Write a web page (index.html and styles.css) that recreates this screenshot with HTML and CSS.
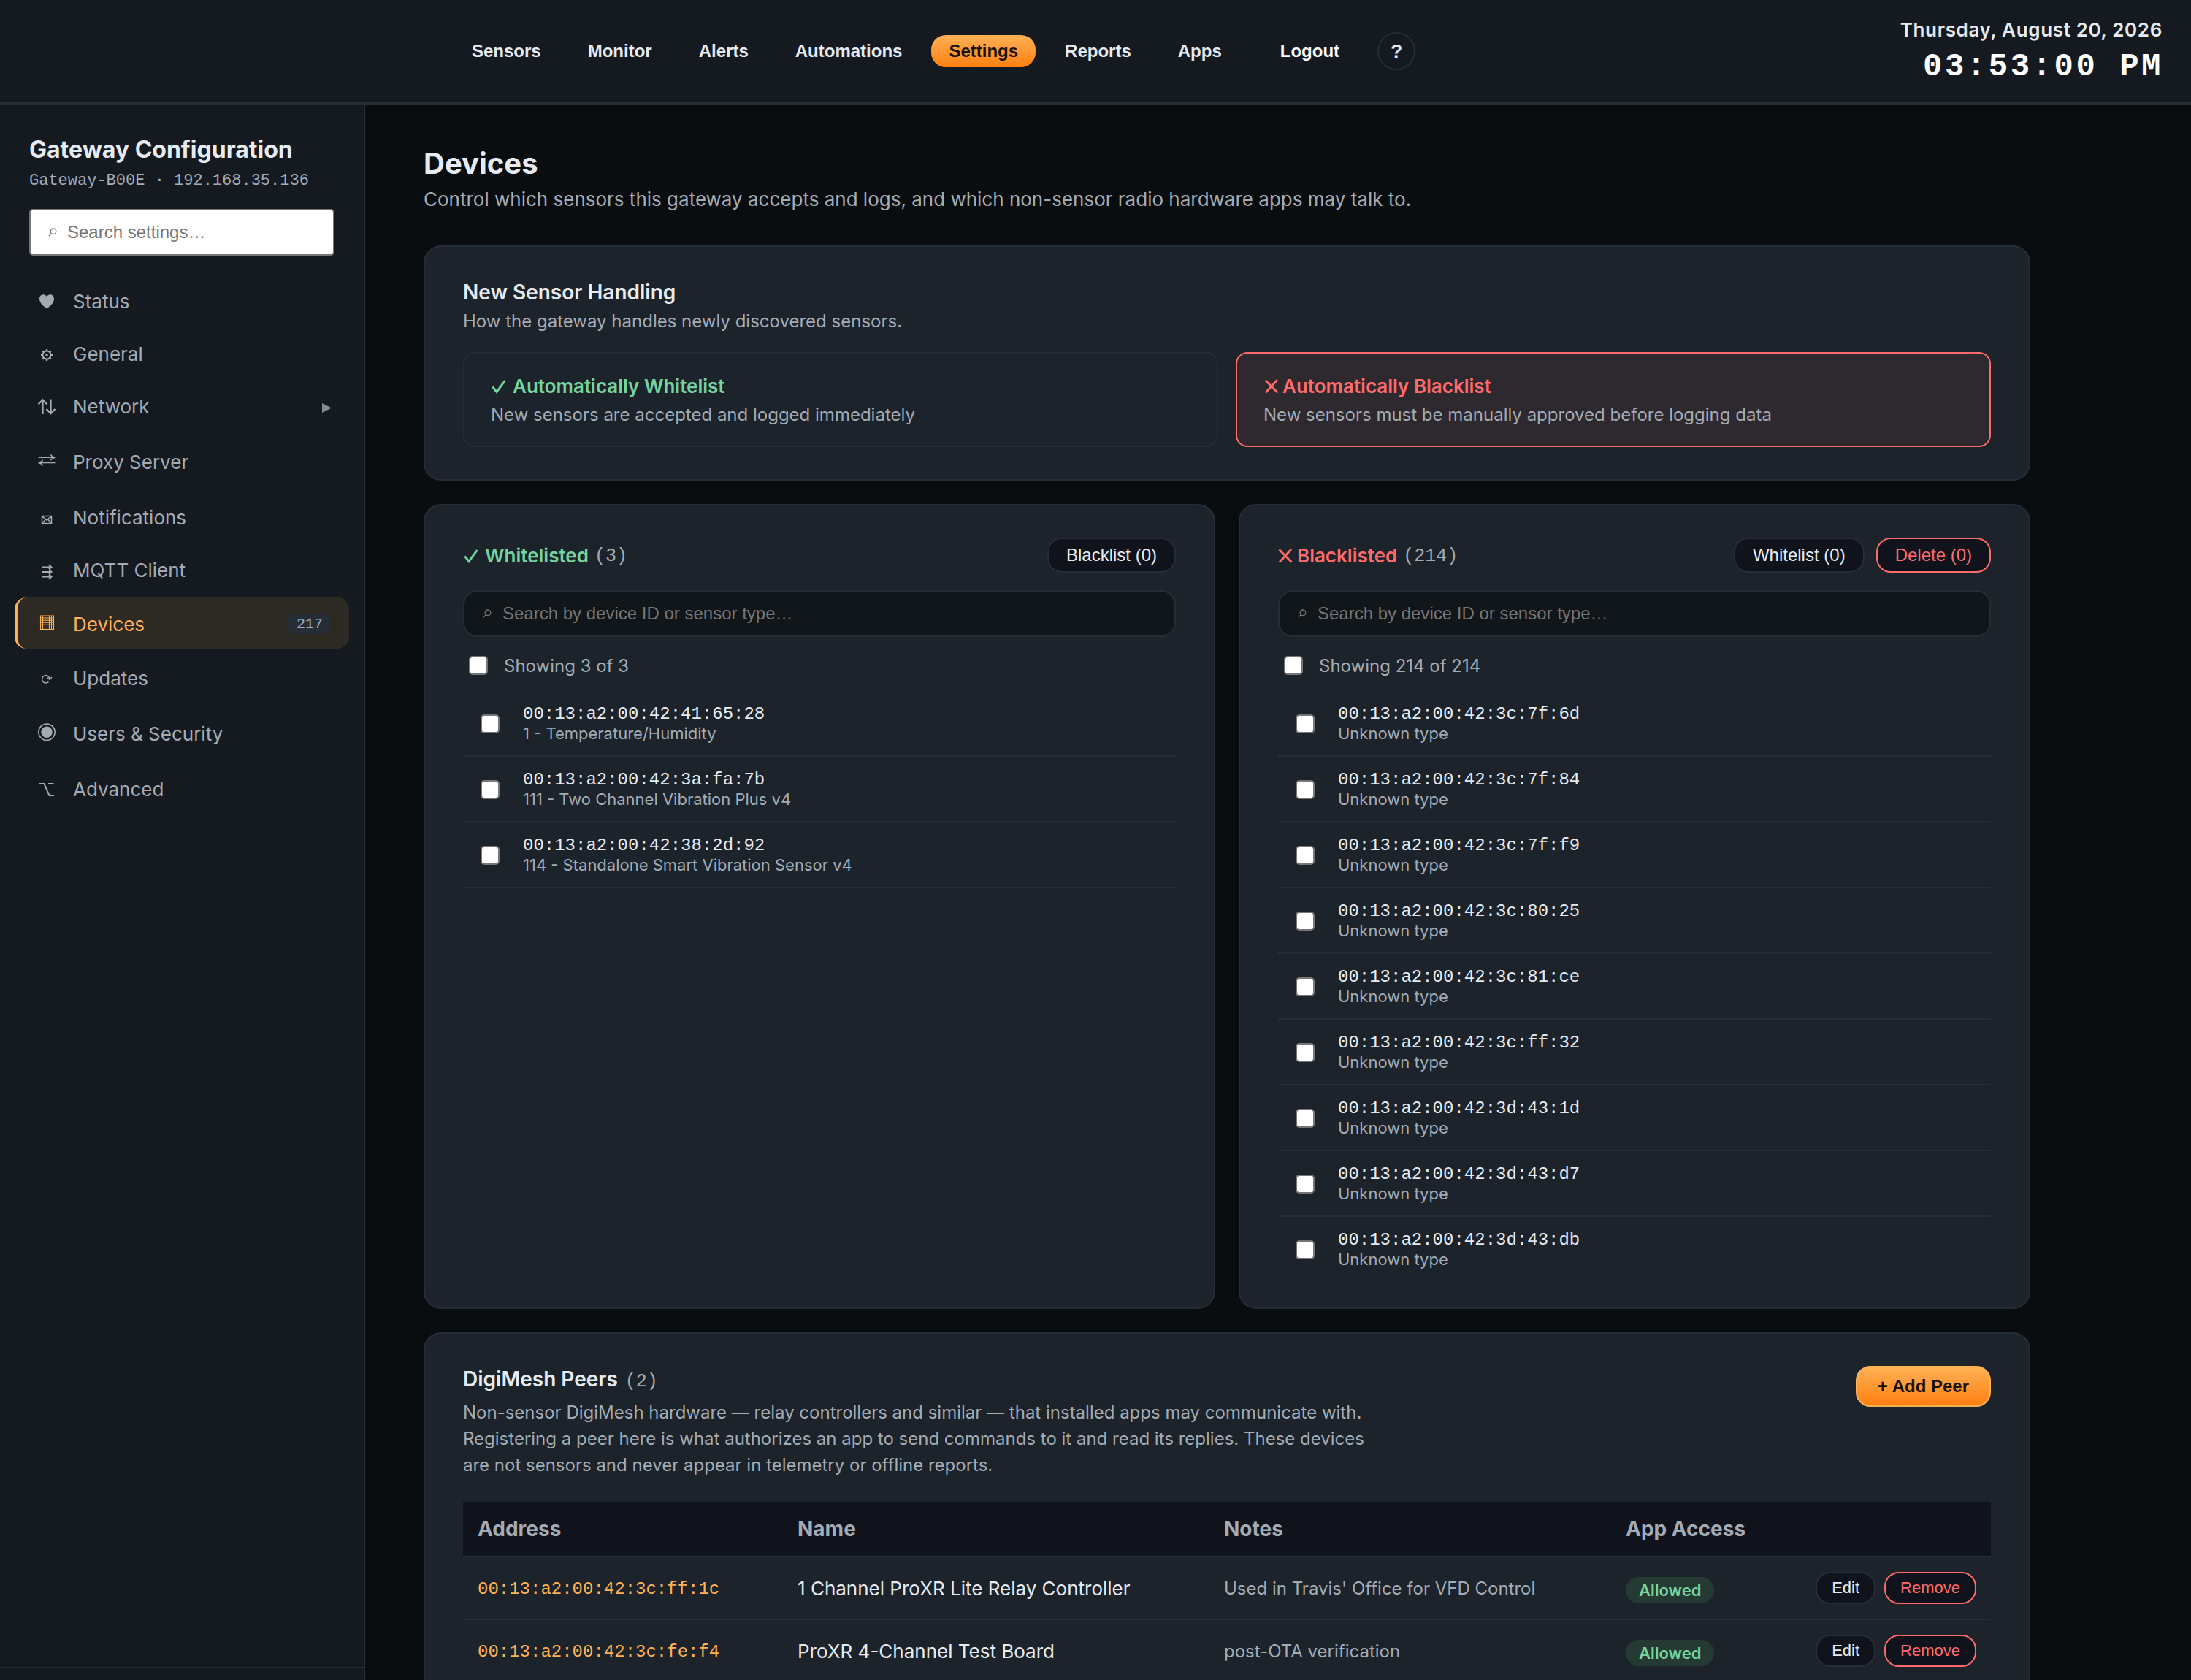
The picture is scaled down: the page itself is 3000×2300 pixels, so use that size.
FILE: index.html
```html
<!DOCTYPE html>
<html lang="en">
<head>
<meta charset="utf-8">
<title>Gateway Configuration</title>
<link rel="stylesheet" href="styles.css">
</head>
<body>
<header class="topbar">
  <nav class="topnav">
    <a>Sensors</a><a>Monitor</a><a>Alerts</a><a>Automations</a><a class="current">Settings</a><a>Reports</a><a>Apps</a><a class="logout">Logout</a><a class="help">?</a>
  </nav>
  <div class="clock">
    <div class="date">Thursday, August 20, 2026</div>
    <div class="time">03:53:00 PM</div>
  </div>
</header>
<div class="shell">
  <aside class="sidebar">
    <div class="side-body">
      <h2 class="side-title">Gateway Configuration</h2>
      <div class="side-sub">Gateway-B00E · 192.168.35.136</div>
      <div class="side-search"><svg class="mag" viewBox="0 0 12 12"><circle cx="7" cy="4.8" r="3.8"/><path d="M4.4 7.6 1 11"/></svg>Search settings…</div>
      <ul class="menu">
        <li><svg class="ico" viewBox="0 0 28 36"><path class="fill" d="M14 26.5C10 23.5 4 19 4 13.2 4 9.500 6.300 7.200 9.200 7.200c2 0 3.800 1 4.800 2.800 1-1.800 2.800-2.800 4.800-2.800 2.900 0 5.200 2.300 5.200 6C24 19 18 23.500 14 26.500Z"/></svg><span>Status</span></li>
        <li><svg class="ico" viewBox="0 0 28 36"><circle cx="14" cy="18" r="5.600"/><circle class="fill" cx="14" cy="18" r="1.700"/><path class="teeth" d="M14 10v3M14 23v3M6 18h3M19 18h3M8.300 12.300l2.200 2.200M17.500 21.500l2.200 2.200M8.300 23.700l2.200-2.200M17.500 14.500l2.200-2.200"/></svg><span>General</span></li>
        <li class="tall"><svg class="ico" viewBox="0 0 28 36"><path class="bold" d="M8.500 27V8M2.500 13.500 8.500 7.500l6 6M19.500 6.500V25.500M13.500 20l6 6 6-6"/></svg><span>Network</span><svg class="caret" viewBox="0 0 12 12"><path d="M0 0 12 6 0 12Z"/></svg></li>
        <li class="tall"><svg class="ico" viewBox="0 0 28 36"><path class="thin" d="M2.500 10.300H25M19.500 6.300c1 2.200 3 3.500 6 4-3 .5-5 1.800-6 4M3 17.500H25.500M8.500 13.500c-1 2.200-3 3.500-6 4 3 .5 5 1.800 6 4"/></svg><span>Proxy Server</span></li>
        <li><svg class="ico" viewBox="0 0 28 36"><path class="thin" d="M7.500 14.500h13v10h-13zM7.500 14.500l6.500 5.500 6.500-5.500M7.500 24.500l5-5.500M20.500 24.500l-5-5.500"/></svg><span>Notifications</span></li>
        <li class="mid"><svg class="ico" viewBox="0 0 28 36"><path d="M7 12.500H20M7 19H20M7 25.500H20M17 9.500l3.500 3-3.500 3M17 16l3.500 3-3.500 3M17 22.500l3.500 3-3.500 3"/></svg><span>MQTT Client</span></li>
        <li class="mid active"><svg class="ico" viewBox="0 0 28 36"><path class="hair" d="M5.500 5h18v18.500h-18zM8.500 5v18.500M11.500 5v18.500M14.500 5v18.500M17.500 5v18.500M20.500 5v18.500M5.500 8h18M5.500 11.200h18M5.500 14.300h18M5.500 17.400h18M5.500 20.500h18"/></svg><span>Devices</span><em class="badge">217</em></li>
        <li class="tall"><svg class="ico" viewBox="0 0 28 36"><path class="thin" d="M16.500 21.500A5.200 5.200 0 1 1 18 17.500M14.500 15.500l3.500 2.800 3-3.300"/></svg><span>Updates</span></li>
        <li class="tall"><svg class="ico" viewBox="0 0 28 36"><circle class="thin" cx="14" cy="14.300" r="11.200"/><circle class="fill" cx="14" cy="14.300" r="7.700"/></svg><span>Users &amp; Security</span></li>
        <li><svg class="ico" viewBox="0 0 28 36"><path d="M4 9H10.500L17.500 25H24M16 9H23.500"/></svg><span>Advanced</span></li>
      </ul>
    </div>
    <div class="side-foot"></div>
  </aside>
  <main class="main">
    <h1>Devices</h1>
    <p class="lead">Control which sensors this gateway accepts and logs, and which non-sensor radio hardware apps may talk to.</p>

    <section class="card handling">
      <h3>New Sensor Handling</h3>
      <p class="hint">How the gateway handles newly discovered sensors.</p>
      <div class="options">
        <div class="option">
          <div class="option-title ok"><svg class="check" viewBox="0 0 20 20"><path d="M1.500 10.500 7 17.500 18.500 2"/></svg>Automatically Whitelist</div>
          <div class="option-desc">New sensors are accepted and logged immediately</div>
        </div>
        <div class="option chosen">
          <div class="option-title bad"><svg class="cross" viewBox="0 0 20 20"><path d="M1.500 1.500 18.500 18.500M18 1 2 18.500"/></svg>Automatically Blacklist</div>
          <div class="option-desc">New sensors must be manually approved before logging data</div>
        </div>
      </div>
    </section>

    <div class="pair">
      <section class="card">
        <div class="list-head">
          <h4 class="ok"><svg class="check" viewBox="0 0 20 20"><path d="M1.500 10.500 7 17.500 18.500 2"/></svg>Whitelisted<span class="count">(3)</span></h4>
          <button class="btn">Blacklist (0)</button>
        </div>
        <div class="search"><svg class="mag" viewBox="0 0 12 12"><circle cx="7" cy="4.800" r="3.800"/><path d="M4.400 7.600 1 11"/></svg>Search by device ID or sensor type…</div>
        <div class="showing"><i class="box"></i>Showing 3 of 3</div>
        <div class="rows">
          <div class="row"><i class="box"></i><div><b>00:13:a2:00:42:41:65:28</b><small>1 - Temperature/Humidity</small></div></div>
          <div class="row"><i class="box"></i><div><b>00:13:a2:00:42:3a:fa:7b</b><small>111 - Two Channel Vibration Plus v4</small></div></div>
          <div class="row"><i class="box"></i><div><b>00:13:a2:00:42:38:2d:92</b><small>114 - Standalone Smart Vibration Sensor v4</small></div></div>
        </div>
      </section>
      <section class="card">
        <div class="list-head">
          <h4 class="bad"><svg class="cross" viewBox="0 0 20 20"><path d="M1.500 1.500 18.500 18.500M18 1 2 18.500"/></svg>Blacklisted<span class="count">(214)</span></h4>
          <button class="btn">Whitelist (0)</button>
          <button class="btn danger">Delete (0)</button>
        </div>
        <div class="search"><svg class="mag" viewBox="0 0 12 12"><circle cx="7" cy="4.800" r="3.800"/><path d="M4.400 7.600 1 11"/></svg>Search by device ID or sensor type…</div>
        <div class="showing"><i class="box"></i>Showing 214 of 214</div>
        <div class="rows">
          <div class="row"><i class="box"></i><div><b>00:13:a2:00:42:3c:7f:6d</b><small>Unknown type</small></div></div>
          <div class="row"><i class="box"></i><div><b>00:13:a2:00:42:3c:7f:84</b><small>Unknown type</small></div></div>
          <div class="row"><i class="box"></i><div><b>00:13:a2:00:42:3c:7f:f9</b><small>Unknown type</small></div></div>
          <div class="row"><i class="box"></i><div><b>00:13:a2:00:42:3c:80:25</b><small>Unknown type</small></div></div>
          <div class="row"><i class="box"></i><div><b>00:13:a2:00:42:3c:81:ce</b><small>Unknown type</small></div></div>
          <div class="row"><i class="box"></i><div><b>00:13:a2:00:42:3c:ff:32</b><small>Unknown type</small></div></div>
          <div class="row"><i class="box"></i><div><b>00:13:a2:00:42:3d:43:1d</b><small>Unknown type</small></div></div>
          <div class="row"><i class="box"></i><div><b>00:13:a2:00:42:3d:43:d7</b><small>Unknown type</small></div></div>
          <div class="row"><i class="box"></i><div><b>00:13:a2:00:42:3d:43:db</b><small>Unknown type</small></div></div>
        </div>
      </section>
    </div>

    <section class="card peers">
      <div class="peers-head">
        <div>
          <h3>DigiMesh Peers<span class="count">(2)</span></h3>
          <p class="peers-desc">Non-sensor DigiMesh hardware — relay controllers and similar — that installed apps may communicate with.<br>Registering a peer here is what authorizes an app to send commands to it and read its replies. These devices<br>are not sensors and never appear in telemetry or offline reports.</p>
        </div>
        <button class="add">+ Add Peer</button>
      </div>
      <div class="table">
        <div class="tr th"><span>Address</span><span>Name</span><span>Notes</span><span>App Access</span><span></span></div>
        <div class="tr"><span class="addr">00:13:a2:00:42:3c:ff:1c</span><span class="name">1 Channel ProXR Lite Relay Controller</span><span class="note">Used in Travis' Office for VFD Control</span><span><em class="allowed">Allowed</em></span><span class="acts"><button class="btn sm">Edit</button><button class="btn sm danger">Remove</button></span></div>
        <div class="tr"><span class="addr">00:13:a2:00:42:3c:fe:f4</span><span class="name">ProXR 4-Channel Test Board</span><span class="note">post-OTA verification</span><span><em class="allowed">Allowed</em></span><span class="acts"><button class="btn sm">Edit</button><button class="btn sm danger">Remove</button></span></div>
      </div>
    </section>
  </main>
</div>
</body>
</html>
```
FILE: styles.css
```css
:root {
  --line: #252e37;
  --panel: #151a21;
  --card: #1c232a;
  --text: #e6ebf2;
  --muted: #a3abb5;
  --green: #76d4a0;
  --red: #ff6b6b;
  --amber: #ffb155;
  --mono: "Courier New", "Liberation Mono", monospace;
}
* { box-sizing: border-box; margin: 0; padding: 0; }
html, body { height: 2300px; overflow: hidden; }
body {
  width: 3000px;
  display: flex;
  flex-direction: column;
  background: #0a0d10;
  color: var(--text);
  font-family: Inter, "Liberation Sans", sans-serif;
  font-size: 26px;
}
button { font-family: "Liberation Sans", sans-serif; }
svg { flex: none; display: block; }

.topbar {
  flex: none;
  height: 144px;
  display: flex;
  align-items: center;
  justify-content: space-between;
  padding: 0 38px 0 622px;
  background: var(--panel);
  border-bottom: 4px solid var(--line);
}
.topnav { display: flex; align-items: center; gap: 16px; font: bold 24px/28px "Liberation Sans", sans-serif; }
.topnav a { padding: 8px 24px; border-radius: 20px; }
.topnav .current { background: linear-gradient(#ffb155, #ff7f11); color: #14110c; }
.topnav .logout { margin-left: 16px; color: #fff; }
.topnav .help {
  width: 52px; height: 52px; padding: 0; margin-left: 12px;
  border: 2px solid var(--line); border-radius: 50%;
  text-align: center; font-size: 26px; line-height: 48px;
}
.clock { text-align: right; }
.date { font-size: 26px; line-height: 32px; font-weight: 600; letter-spacing: 0.65px; padding-right: 1px; }
.time { font: bold 44px/50px var(--mono); letter-spacing: 3.500px; color: #fff; margin-top: 9px; }

.shell { flex: 1; min-height: 0; display: flex; overflow: hidden; }
.sidebar {
  flex: none; width: 500px;
  display: flex; flex-direction: column; justify-content: space-between;
  background: var(--panel); border-right: 2px solid var(--line);
}
.side-body { padding: 41px 20px 0; }
.side-title { padding: 0 20px; font-size: 32px; line-height: 40px; font-weight: 700; }
.side-sub { padding: 0 20px; margin-top: 8px; font: 22px/30px var(--mono); color: var(--muted); }
.side-search {
  display: flex; align-items: center; gap: 14px;
  height: 64px; margin: 23px 20px 0; padding-left: 24px;
  background: #fff; color: #757575;
  border: 2px solid #767676; border-radius: 5px;
  font: 24px "Liberation Sans", sans-serif;
}
.mag { width: 12px; height: 12px; fill: none; stroke: currentColor; stroke-width: 1.300; }
.menu { list-style: none; display: flex; flex-direction: column; gap: 4px; margin-top: 26px; color: var(--muted); }
.menu li {
  height: 68px; display: flex; align-items: flex-start; padding: 20px 24px 0 26px;
  border-left: 4px solid transparent; border-radius: 16px;
}
.menu .mid { height: 70px; }
.menu .tall { height: 72px; }
.menu span { flex: 1; padding-left: 22px; line-height: 34px; }
.menu .active { background: #2d2923; border-color: var(--amber); color: var(--amber); }
.ico { width: 28px; height: 36px; fill: none; stroke: currentColor; stroke-width: 2; }
.ico .fill { fill: currentColor; stroke: none; }
.ico .hair { stroke-width: 1.100; }
.ico .thin { stroke-width: 1.500; }
.ico .bold { stroke-width: 2.300; }
.ico .teeth { stroke-width: 2.400; }
.caret { width: 13px; height: 13px; margin: 12px 0 0; fill: #858c95; }
.badge {
  width: 60px; height: 28px; margin-top: 2px; border-radius: 14px;
  background: #252e37; color: var(--muted); text-align: center; font: 20px/30px var(--mono);
}
.side-foot { height: 18px; border-top: 2px solid var(--line); }

.main { width: 2200px; margin-left: 80px; padding-top: 56px; }
h1 { font-size: 40px; line-height: 48px; font-weight: 700; }
.lead { margin-top: 8px; line-height: 34px; color: var(--muted); }
.card { border: 2px solid var(--line); border-radius: 24px; background: var(--card); padding: 44px 52px; }
.handling { margin-top: 46px; height: 322px; }
h3 { font-size: 28px; line-height: 34px; font-weight: 600; }
.handling h3 { padding-top: 1px; }
.hint { font-size: 24px; line-height: 32px; margin-top: 7px; color: var(--muted); }
.options { display: grid; grid-template-columns: 1fr 1fr; gap: 24px; margin-top: 26px; }
.option { height: 130px; padding: 28px 36px; border: 2px solid var(--line); border-radius: 16px; }
.chosen { border-color: var(--red); background: #2e282f; }
.option-title { display: flex; align-items: center; gap: 9px; font-weight: 600; line-height: 34px; }
.option-title.bad { gap: 5px; }
.option-title svg { margin-left: 1px; }
.option-desc { font-size: 24px; line-height: 32px; margin-top: 6px; color: var(--muted); }
.ok { color: var(--green); }
.bad { color: var(--red); }
.check, .cross { width: 20px; height: 20px; fill: none; stroke: currentColor; stroke-width: 2.900; }

.pair { display: grid; grid-template-columns: 1fr 1fr; gap: 32px; margin-top: 32px; }
.pair .card { height: 1102px; }
.list-head { display: flex; align-items: center; gap: 16px; height: 48px; }
.list-head h4 { flex: 1; display: flex; align-items: center; gap: 8px; padding-top: 1px; font-size: 26px; font-weight: 600; }
.list-head .ok svg { margin: 0 1px 0 1px; }
.list-head .bad svg { margin-right: -2px; }
.count { font: 25px var(--mono); color: var(--muted); }
.list-head .count { padding-top: 2px; }
.btn {
  height: 48px; padding: 0 24px; border: 2px solid var(--line); border-radius: 20px;
  background: #10131b; color: var(--text); font-size: 24px;
}
.btn.danger { border-color: var(--red); color: var(--red); }
.search {
  display: flex; align-items: center; gap: 15px; height: 64px; margin-top: 24px; padding-left: 25px;
  background: #11161a; border: 2px solid var(--line); border-radius: 20px; color: #757575; font: 24px "Liberation Sans", sans-serif;
}
.box { flex: none; width: 26px; height: 26px; background: #fff; border: 2px solid #767676; border-radius: 5px; }
.showing { display: flex; align-items: center; gap: 22px; height: 40px; margin-top: 19px; padding-left: 8px; color: var(--muted); font-size: 24px; }
.rows { margin-top: 15px; height: 800px; overflow: hidden; }
.row { display: flex; align-items: center; gap: 32px; height: 90px; padding-left: 24px; border-bottom: 2px solid var(--line); }
.row .box { margin-top: 2px; }
.row b { display: block; padding-top: 4px; font: 24px/24px var(--mono); }
.row small { display: block; font-size: 22px; line-height: 28px; color: var(--muted); }

.peers { margin-top: 32px; height: 600px; }
.peers-head { display: flex; justify-content: space-between; align-items: flex-start; }
.peers h3 { height: 34px; margin-top: 1px; }
.peers h3 .count { margin-left: 10px; line-height: 30px; }
.peers-desc { font-size: 24px; line-height: 36px; margin-top: 11px; color: var(--muted); }
.add {
  height: 56px; padding: 0 28px; border: 2px solid var(--amber); border-radius: 20px;
  background: linear-gradient(#ffb155, #ff7f11); color: #1a1206; font-size: 24px; font-weight: bold;
}
.table { margin-top: 32px; }
.tr {
  display: grid; grid-template-columns: 438px 584px 550px 240px 1fr; align-items: center;
  height: 86px; padding: 0 20px; border-bottom: 2px solid var(--line);
}
.th { height: 76px; background: #10131b; color: var(--muted); font-size: 28px; font-weight: 700; }
.addr { padding-top: 2px; font: 24px var(--mono); color: var(--amber); }
.note { font-size: 24px; color: var(--muted); }
.allowed {
  display: inline-block; height: 36px; padding: 0 18px; margin-top: 6px; border-radius: 18px;
  background: #243a33; color: var(--green); font: 600 22px/36px Inter, sans-serif;
}
.acts { display: flex; gap: 12px; justify-content: flex-end; }
.sm { height: 44px; padding: 0 20px; font-size: 22px; }
```
